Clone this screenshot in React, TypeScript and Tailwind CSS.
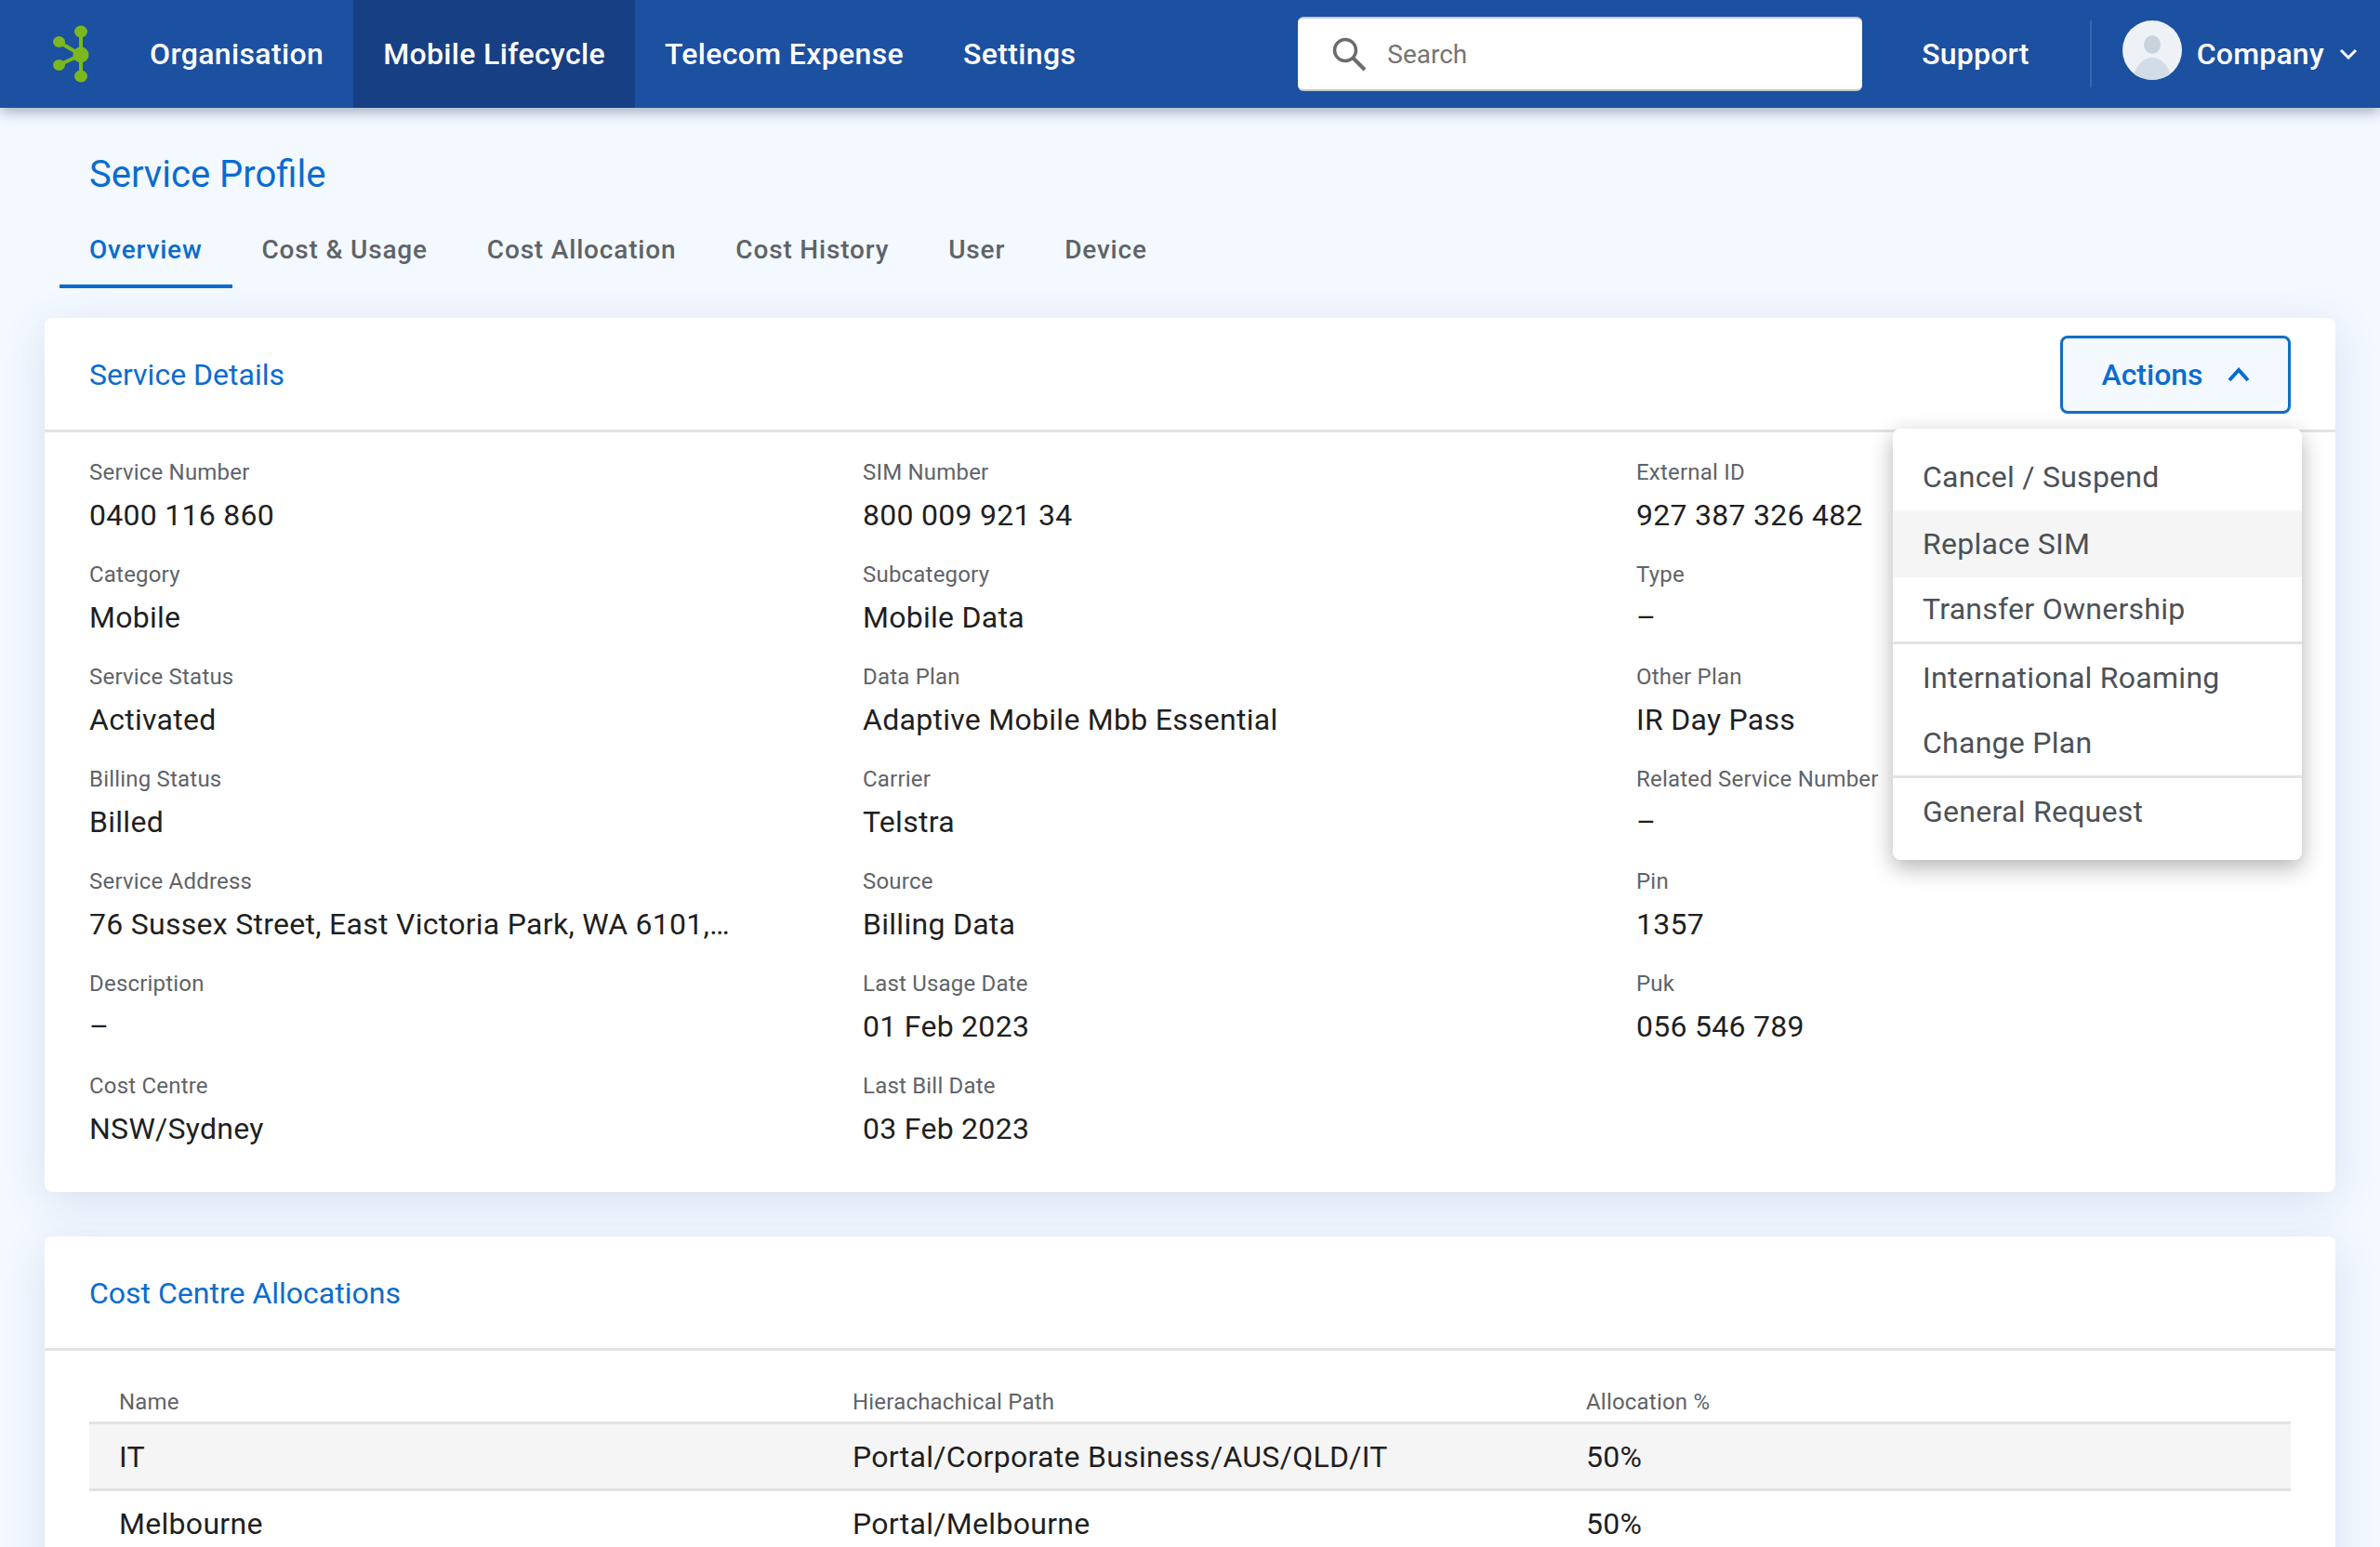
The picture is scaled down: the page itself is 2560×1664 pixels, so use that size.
import React from 'react';

const navItems = [
  { label: 'Organisation', active: false },
  { label: 'Mobile Lifecycle', active: true },
  { label: 'Telecom Expense', active: false },
  { label: 'Settings', active: false },
];

const tabs = ['Overview', 'Cost & Usage', 'Cost Allocation', 'Cost History', 'User', 'Device'];

const details = [
  [
    ['Service Number', '0400 116 860'],
    ['Category', 'Mobile'],
    ['Service Status', 'Activated'],
    ['Billing Status', 'Billed'],
    ['Service Address', '76 Sussex Street, East Victoria Park, WA 6101,…'],
    ['Description', '–'],
    ['Cost Centre', 'NSW/Sydney'],
  ],
  [
    ['SIM Number', '800 009 921 34'],
    ['Subcategory', 'Mobile Data'],
    ['Data Plan', 'Adaptive Mobile Mbb Essential'],
    ['Carrier', 'Telstra'],
    ['Source', 'Billing Data'],
    ['Last Usage Date', '01 Feb 2023'],
    ['Last Bill Date', '03 Feb 2023'],
  ],
  [
    ['External ID', '927 387 326 482'],
    ['Type', '–'],
    ['Other Plan', 'IR Day Pass'],
    ['Related Service Number', '–'],
    ['Pin', '1357'],
    ['Puk', '056 546 789'],
  ],
];

const menu = [
  { label: 'Cancel / Suspend' },
  { label: 'Replace SIM', hover: true },
  { label: 'Transfer Ownership', divider: true },
  { label: 'International Roaming' },
  { label: 'Change Plan', divider: true },
  { label: 'General Request' },
];

const allocations = [
  { name: 'IT', path: 'Portal/Corporate Business/AUS/QLD/IT', pct: '50%', shaded: true },
  { name: 'Melbourne', path: 'Portal/Melbourne', pct: '50%', shaded: false },
];

function Logo() {
  return (
    <svg width="48" height="64" viewBox="0 0 48 64" className="shrink-0">
      <g fill="#7ab81e" stroke="none">
        <path d="M30 8V56" stroke="#7ab81e" strokeWidth="4" />
        <path d="M6 19L30 33L6 44" stroke="#7ab81e" strokeWidth="4" fill="none" />
        <ellipse cx="30" cy="8" rx="7" ry="6.5" />
        <ellipse cx="30" cy="56" rx="7" ry="6.5" />
        <ellipse cx="6.5" cy="19" rx="6.5" ry="6" />
        <ellipse cx="6.5" cy="44" rx="6.5" ry="6" />
        <circle cx="30" cy="33" r="8.5" />
      </g>
    </svg>
  );
}

function Avatar() {
  return (
    <svg width="64" height="64" viewBox="0 0 64 64" className="mb-[8px] shrink-0">
      <clipPath id="avatar-clip">
        <circle cx="32" cy="32" r="32" />
      </clipPath>
      <g clipPath="url(#avatar-clip)">
        <rect width="64" height="64" fill="#eef2f7" />
        <ellipse cx="32" cy="26" rx="9" ry="10" fill="#c9d3de" />
        <path d="M12 64C12 50 22 40 32 40C42 40 52 50 52 64Z" fill="#d2dce6" />
      </g>
    </svg>
  );
}

export default function App() {
  return (
    <div className="h-[1664px] w-[2560px] overflow-hidden bg-[#f3f9ff] font-['Roboto',sans-serif]">
      {/* Top bar */}
      <header className="relative z-10 flex h-[116px] items-center bg-[#1c50a0] shadow-[0_4px_14px_rgba(30,50,90,0.4)]">
        <div className="ml-[57px] w-[72px]">
          <Logo />
        </div>
        <nav className="flex h-full">
          {navItems.map(item => (
            <a
              key={item.label}
              className={`flex h-full items-center px-8 text-[32px] font-medium tracking-[0.35px] text-white ${
                item.active ? 'bg-[#173f83]' : ''
              }`}
            >
              {item.label}
            </a>
          ))}
        </nav>
        <div className="ml-[207px] flex h-[80px] w-[607px] items-center gap-[22px] rounded-md border-t-2 border-b-2 border-[#c3c9d3] bg-white pl-[36px]">
          <svg width="38" height="38" viewBox="0 0 38 38" fill="none" stroke="#6b6b6b" className="shrink-0">
            <circle cx="15" cy="15" r="11.5" strokeWidth="3.5" />
            <path d="M23.5 23.5L36 36" strokeWidth="4" />
          </svg>
          <span className="pt-[2px] text-[28px] text-[#757575]">Search</span>
        </div>
        <a className="ml-[64px] text-[32px] font-medium tracking-[0.2px] text-white">Support</a>
        <div className="ml-[65px] h-[72px] w-[2px] bg-[#3a68ae]" />
        <div className="ml-[33px] flex items-center">
          <Avatar />
          <span className="ml-4 text-[32px] font-medium tracking-[0.2px] text-white">Company</span>
          <svg width="20" height="12" viewBox="0 0 20 12" fill="none" stroke="#fff" strokeWidth="3" className="ml-4">
            <path d="M2 2L10 10L18 2" />
          </svg>
        </div>
      </header>

      {/* Title and tabs */}
      <div className="px-[64px]">
        <h1 className="mt-[46px] ml-8 text-[40px] leading-[52px] font-normal text-[#0a6ccf]">Service Profile</h1>
        <div className="mt-[31px] flex">
          {tabs.map((tab, i) => (
            <div
              key={tab}
              className={`h-[65px] border-b-4 px-8 pt-[4px] text-[28px] leading-[40px] font-medium tracking-[0.82px] ${
                i === 0 ? 'border-[#0a6ccf] text-[#0a6ccf]' : 'border-transparent text-[#5f6368]'
              }`}
            >
              {tab}
            </div>
          ))}
        </div>
      </div>

      {/* Service details */}
      <section className="relative mx-[48px] mt-[32px] h-[940px] rounded-lg bg-white shadow-[0_10px_48px_rgba(40,80,150,0.14)]">
        <div className="flex h-[123px] items-center justify-between border-b-[3px] border-[#e3e3e3] pt-[2px] pr-[48px] pl-[48px]">
          <h2 className="text-[32px] font-normal text-[#0a6ccf]">Service Details</h2>
          <button className="flex h-[84px] w-[248px] items-center justify-center gap-[26px] rounded-lg border-[3px] border-[#0e6fc4] bg-[#f3f9ff] text-[32px] font-medium text-[#0a6ccf]">
            Actions
            <svg width="24" height="16" viewBox="0 0 24 16" fill="none" stroke="#0a6ccf" strokeWidth="4">
              <path d="M2 14L12 3L22 14" />
            </svg>
          </button>
        </div>
        <div className="grid grid-cols-[832px_832px_1fr] pt-[25px] pl-[48px]">
          {details.map((column, c) => (
            <div key={c} className="flex flex-col">
              {column.map(([label, value]) => (
                <div key={label} className="h-[110px]">
                  <div className="text-[24px] leading-[36px] tracking-[0.2px] text-[#5f6368]">{label}</div>
                  <div className="mt-[4px] text-[32px] leading-[48px] tracking-[0.28px] text-[#1f1f1f]">{value}</div>
                </div>
              ))}
            </div>
          ))}
        </div>

        {/* Actions menu */}
        <div className="absolute top-[119px] right-[36px] w-[440px] rounded-lg bg-white py-4 shadow-[0_8px_24px_rgba(0,0,0,0.3)]">
          {menu.map(item => (
            <div
              key={item.label}
              className={`flex h-[72px] items-center px-8 pb-[1px] text-[32px] tracking-[0.27px] text-[#4c5156] ${
                item.hover ? 'bg-[#f5f5f5]' : ''
              } ${item.divider ? 'border-b-[3px] border-[#e3e3e3]' : ''}`}
            >
              {item.label}
            </div>
          ))}
        </div>
      </section>

      {/* Cost centre allocations */}
      <section className="mx-[48px] mt-[48px] h-[400px] rounded-lg bg-white shadow-[0_10px_48px_rgba(40,80,150,0.14)]">
        <div className="flex h-[123px] items-center border-b-[3px] border-[#e3e3e3] pt-[2px] pl-[48px]">
          <h2 className="text-[32px] font-normal text-[#0a6ccf]">Cost Centre Allocations</h2>
        </div>
        <div className="mx-[48px] mt-[32px]">
          <div className="grid h-[47px] grid-cols-[789px_789px_1fr] border-b-[3px] border-[#e3e3e3] pl-8 text-[24px] leading-[46px] tracking-[0.2px] text-[#5f6368]">
            <span>Name</span>
            <span>Hierachachical Path</span>
            <span>Allocation %</span>
          </div>
          {allocations.map(row => (
            <div
              key={row.name}
              className={`grid h-[72px] grid-cols-[789px_789px_1fr] items-center border-b-[3px] border-[#e3e3e3] pl-8 text-[32px] tracking-[0.3px] text-[#1f1f1f] ${
                row.shaded ? 'bg-[#f5f5f5]' : ''
              }`}
            >
              <span>{row.name}</span>
              <span>{row.path}</span>
              <span>{row.pct}</span>
            </div>
          ))}
        </div>
      </section>
    </div>
  );
}
